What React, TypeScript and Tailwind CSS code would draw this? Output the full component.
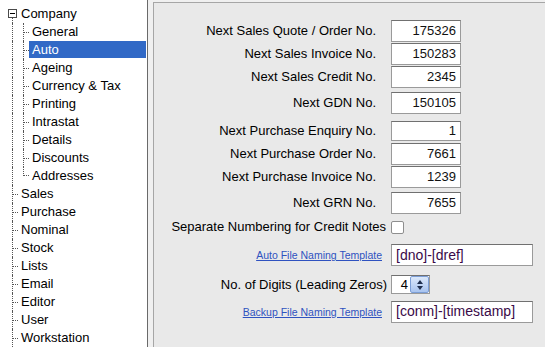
import React from "react";

const font = { fontFamily: '"Liberation Sans", Arial, sans-serif' };

const companyChildren = [
  "General",
  "Auto",
  "Ageing",
  "Currency & Tax",
  "Printing",
  "Intrastat",
  "Details",
  "Discounts",
  "Addresses",
];

const topLevel = [
  "Sales",
  "Purchase",
  "Nominal",
  "Stock",
  "Lists",
  "Email",
  "Editor",
  "User",
  "Workstation",
];

const numberRows = [
  { label: "Next Sales Quote / Order No.", value: "175326", mt: "mt-[17px]", h: "h-[22px]" },
  { label: "Next Sales Invoice No.", value: "150283", mt: "mt-[1px]", h: "h-[22px]" },
  { label: "Next Sales Credit No.", value: "2345", mt: "mt-[1px]", h: "h-[22px]" },
  { label: "Next GDN No.", value: "150105", mt: "mt-[4px]", h: "h-[22px]" },
  { label: "Next Purchase Enquiry No.", value: "1", mt: "mt-[7px]", h: "h-[20px]" },
  { label: "Next Purchase Order No.", value: "7661", mt: "mt-[2px]", h: "h-[22px]" },
  { label: "Next Purchase Invoice No.", value: "1239", mt: "mt-[1px]", h: "h-[22px]" },
  { label: "Next GRN No.", value: "7655", mt: "mt-[4px]", h: "h-[22px]" },
];

const Tick = () => <div className="mt-[9px] w-[6px] border-t border-dotted border-[#555]" />;

const TreeLabel: React.FC<{ text: string; selected?: boolean }> = ({ text, selected }) => (
  <div
    className={
      selected
        ? "flex-1 mr-[1px] pl-[3px] bg-[#3169c6] text-white leading-[17px] h-[17px]"
        : "flex-1 pl-[3px] text-black leading-[18px]"
    }
  >
    {text}
  </div>
);

const Tree = () => (
  <div className="w-[148px] shrink-0 bg-white border-r border-[#6a6a6a] pt-[5px] text-[13px] overflow-hidden">
    {/* Company */}
    <div className="flex h-[18px]">
      <div className="w-[21px] shrink-0 flex flex-col">
        <div className="mt-[4px] ml-[8px] w-[9px] h-[9px] border border-[#4a4a4a] bg-white flex items-center justify-center">
          <div className="w-[5px] border-t border-black" />
        </div>
        <div className="ml-[12px] flex-1 border-l border-dotted border-[#555]" />
      </div>
      <div className="leading-[18px] text-black">Company</div>
    </div>
    {companyChildren.map((c, i) => {
      const last = i === companyChildren.length - 1;
      return (
        <div key={c} className="flex h-[18px]">
          <div className="w-[12px] shrink-0" />
          <div className="w-[11px] shrink-0 border-l border-dotted border-[#555]" />
          <div className="w-[6px] shrink-0 flex flex-col">
            <div className={(last ? "h-[9px]" : "h-full") + " border-l border-dotted border-[#555] flex"}>
              {last ? null : <Tick />}
            </div>
            {last ? <div className="w-[6px] border-t border-dotted border-[#555] -translate-y-[1px]" /> : null}
          </div>
          <TreeLabel text={c} selected={c === "Auto"} />
        </div>
      );
    })}
    {topLevel.map((t) => (
      <div key={t} className="flex h-[18px]">
        <div className="w-[12px] shrink-0" />
        <div className="w-[6px] shrink-0 border-l border-dotted border-[#555] flex">
          <Tick />
        </div>
        <TreeLabel text={t} />
      </div>
    ))}
  </div>
);

const NumberInput: React.FC<{ value: string; h: string }> = ({ value, h }) => (
  <div
    className={
      h +
      " w-[70px] bg-white border border-[#9a9a9a] border-t-[#707070] flex items-center justify-end pr-[4px] text-[13px] text-[#111]"
    }
  >
    {value}
  </div>
);

const Spinner = () => (
  <div className="h-[19px] w-[39px] bg-white border border-[#9a9a9a] border-t-[#707070] flex">
    <div className="flex-1 flex items-center justify-end pr-[2px] text-[13px] text-black">4</div>
    <div className="w-[19px] border border-[#7c9ed6] rounded-[2px] bg-gradient-to-b from-[#dbe8fb] to-[#a9c4ef] flex flex-col items-center justify-center gap-[2px]">
      <div className="w-0 h-0 border-l-[3px] border-r-[3px] border-b-[4px] border-l-transparent border-r-transparent border-b-[#1f2f4f]" />
      <div className="w-0 h-0 border-l-[3px] border-r-[3px] border-t-[4px] border-l-transparent border-r-transparent border-t-[#1f2f4f]" />
    </div>
  </div>
);

const Settings = () => (
  <div className="flex-1 ml-[5px] mt-[2px] bg-[#e9e9e9] border-l border-t border-[#a6a6a6] flex flex-col text-[13px] text-black">
    {numberRows.map((r) => (
      <div key={r.label} className={r.mt + " flex items-center"}>
        <div className="w-[233px] text-right pr-[11px] whitespace-nowrap">{r.label}</div>
        <div className="ml-[4px]">
          <NumberInput value={r.value} h={r.h} />
        </div>
      </div>
    ))}
    <div className="mt-[6px] flex items-center h-[14px]">
      <div className="w-[233px] text-right pr-[1px] whitespace-nowrap">Separate Numbering for Credit Notes</div>
      <div className="ml-[4px] w-[13px] h-[13px] bg-white border border-[#8e8e8e] rounded-[2px]" />
    </div>
    <div className="mt-[10px] flex items-center">
      <div className="w-[233px] text-right pr-[5px] whitespace-nowrap">
        <span className="text-[10.5px] text-[#2f52c0] underline">Auto File Naming Template</span>
      </div>
      <div className="ml-[4px] h-[22px] w-[142px] bg-white border border-[#9a9a9a] border-t-[#707070] flex items-center pl-[4px] text-[14px] text-[#3a0a48]">
        [dno]-[dref]
      </div>
    </div>
    <div className="mt-[9px] flex items-center">
      <div className="w-[233px] text-right whitespace-nowrap">No. of Digits (Leading Zeros)</div>
      <div className="ml-[4px]">
        <Spinner />
      </div>
    </div>
    <div className="mt-[6px] flex items-center">
      <div className="w-[233px] text-right pr-[5px] whitespace-nowrap">
        <span className="text-[10.5px] text-[#2f52c0] underline">Backup File Naming Template</span>
      </div>
      <div className="ml-[4px] h-[22px] w-[142px] bg-white border border-[#9a9a9a] border-t-[#707070] flex items-center pl-[4px] text-[14px] text-[#3a0a48]">
        [conm]-[timestamp]
      </div>
    </div>
  </div>
);

export default function App() {
  return (
    <div style={font} className="w-[545px] h-[347px] bg-[#f0f0f0] flex overflow-hidden">
      <Tree />
      <Settings />
    </div>
  );
}
